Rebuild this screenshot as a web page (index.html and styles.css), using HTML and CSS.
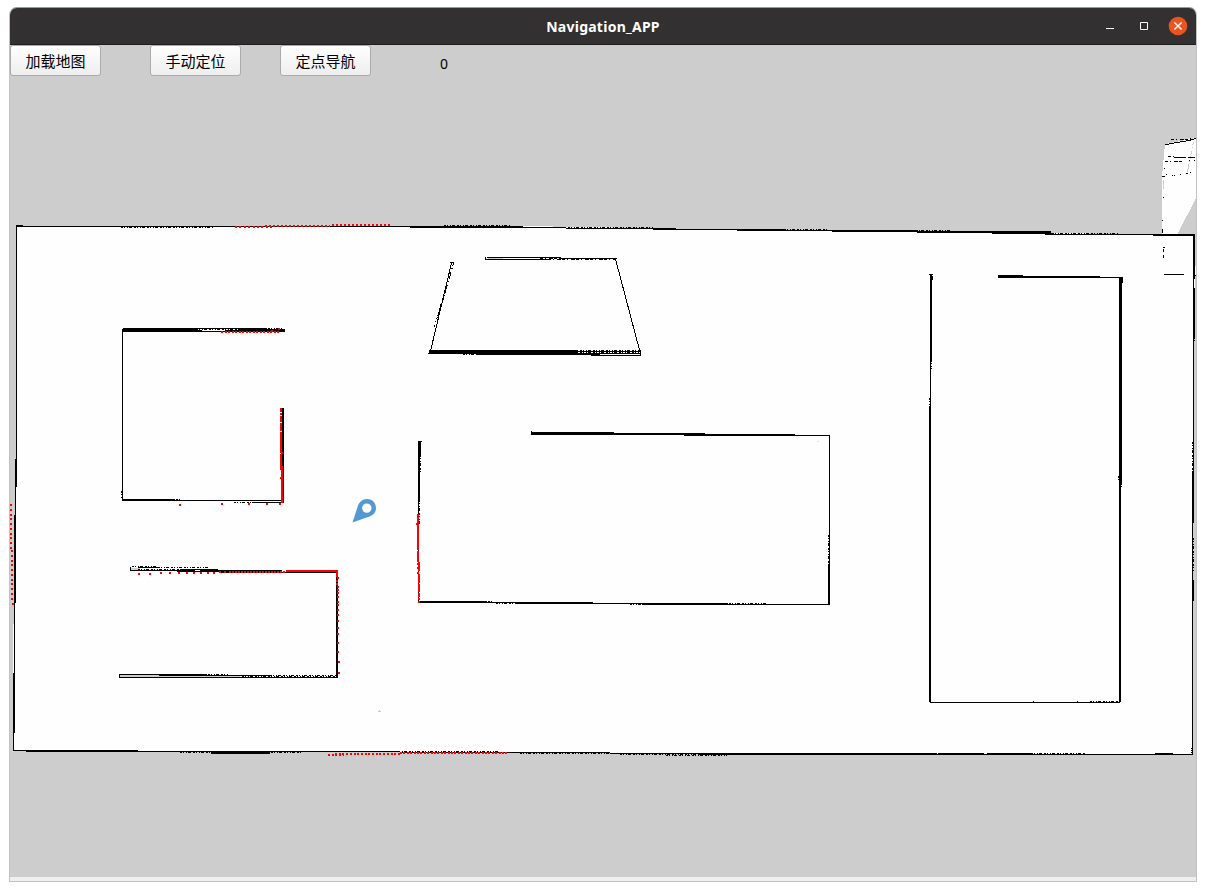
FILE: index.html
```html
<!DOCTYPE html>
<html lang="zh-CN">
<head>
<meta charset="utf-8">
<title>Navigation_APP</title>
<link rel="stylesheet" href="styles.css">
</head>
<body>
<main class="window">
  <header class="titlebar">
    <h1 class="title">Navigation_APP</h1>
    <div class="controls">
      <svg width="20" height="20" viewBox="0 0 20 20"><path class="glyph" d="M6 12.5h8"/></svg>
      <svg width="20" height="20" viewBox="0 0 20 20"><path class="glyph" d="M6.5 6.5h7v7h-7z"/></svg>
      <svg width="20" height="20" viewBox="0 0 20 20"><circle class="close" cx="10" cy="10" r="9.3"/><path class="cross" d="M6.4 6.4l7.2 7.2M13.6 6.4l-7.2 7.2"/></svg>
    </div>
  </header>
  <section class="workspace">
    <svg class="map" width="1186" height="832" viewBox="10 45 1186 832">
      <!-- free space -->
      <path class="free" d="M1165 144L1196 138V198L1177 235H1162V176L1165 144Z"/>
      <path class="free" d="M16 226H523L700 229L920 231L1050 233L1195 235L1192 754H900L500 752L13 750V673L15 480L16 456Z"/>
      <!-- unexplored gaps inside double walls -->
      <path class="gap" d="M120 675.5H240M120 676.5H240M131 568.5H140M131 569.5H138M488 258.5H503M378 711.5h3M379 710.5h1M818 441.5h1"/>
      <path class="gap dash" d="M1193.5 142L1187.5 172"/>
      <path class="gap" d="M1163.5 180V189"/>
      <path class="free-line" d="M1195.5 266V275"/>
      <!-- outer walls -->
      <path class="wall" d="M16.5 225V459M15.5 487V603M14.5 602V674M13.5 673V751"/>
      <path class="wall w2" d="M16 459V487M15 515V602M14 673V733"/>
      <path class="wall" d="M16 225.5H23M16 226.5H410M523 227.5H566M566 228.5H654M676 229.5H740M784 230.5H832"/>
      <path class="wall w2" d="M410 227H523M653 229H676M737 230H784M832 231H918M917 232H1051M992 233H1051M1153 235H1195"/>
      <path class="wall" d="M1045 234.5H1160M1004 233.5H1052"/>
      <path class="wall fine" d="M121 227.5H213M444 225.5H510M568 227.5H654M784 229.5H828M913 230.5H950M1052 233.5H1118"/>
      <path class="wall w2" d="M1194 235V279M1194 288V337M1193 472V523M1193 580V601"/>
      <path class="wall" d="M1193.5 279V523M1192.5 523V755M1194 275.5h2"/>
      <path class="wall fine" d="M1194.5 337V343M1192.5 442V472M1193.5 538V572"/>
      <path class="wall" d="M13 750.5H138M26 751.5H400M400 752.5H610M610 753.5H937M700 754.5H1193M938 753.5H984M987 753.5H1031M1155 753.5H1173M1192 748.5h-1M1192 750.5h-1M1192 752.5h-1"/>
      <path class="wall fine" d="M180 752.5H302M212 753.5H260M396 751.5H500M520 753.5H610M1031 753.5H1085M620 754.5H700M666 755.5H727"/>
      <path class="wall w2" d="M211 753H270"/>
      <!-- upper left room -->
      <path class="wall" d="M122.5 329V500M122 500.5H283M122 499.5H175M252 502.5H283M123 328.5H267M123 331.5H285M196 330.5H202M225 330.5H285M239 329.5H285"/>
      <path class="wall w3" d="M123 329.5H196"/>
      <path class="wall fine" d="M176 499.5H182M234 502.5H252M196 329.5H240M268 328.5H282M121.5 491V499"/>
      <path class="wall w2" d="M283 408V503"/>
      <!-- trapezoid room -->
      <path class="wall" d="M430.5 351L451.5 263M450 262.5H454M485 259.5H548M487 257.5H561M485.5 257V260M560 258.5H617M615.5 259L640 352M441 304L438 316"/>
      <path class="wall dash" d="M453.5 263L448 283L441 307L434 327M548 259.5H616M540 258.5H561"/>
      <path class="wall w3" d="M429 351.5H578"/>
      <path class="wall" d="M428 353.5H641M476 354.5H600M591 355.5H641M640.5 350V356M578 351.5H641"/>
      <path class="wall fine" d="M580 350.5H641M580 352.5H641M463 354.5H476"/>
      <!-- lower left room -->
      <path class="wall" d="M130 570.5H195M130.5 567V571M138 567.5H158M177 571.5H280M180 569.5H218M219 572.5H337M200 570.5H282"/>
      <path class="wall fine" d="M132 566.5H157M158 567.5H210M138 569.5H218M218 570.5H280"/>
      <path class="wall" d="M119 674.5H207M119.5 674V678M159 675.5H270M120 677.5H338"/>
      <path class="wall fine" d="M208 674.5H228M242 676.5H337M270 675.5H337"/>
      <path class="wall w2" d="M337 572V678"/>
      <!-- middle room -->
      <path class="wall" d="M418 441.5H422M418.5 441V602M419.5 441V500M420.5 441V455M829.5 435V605M728 604.5H830M487 602.5H523M593 603.5H644M795 435.5H830"/>
      <path class="wall w2" d="M419 602H487M515 603H593M642 604H728M548 434H684M684 435H795M829 564V605"/>
      <path class="wall w3" d="M531 433.5H614"/>
      <path class="wall" d="M614 433.5H705M531.5 431V435"/>
      <path class="wall fine" d="M420.5 455V472M419.5 500V525M828.5 535V564M488 601.5H494M496 603.5H515M729 603.5H766M630 604.5H642"/>
      <!-- right room -->
      <path class="wall w2" d="M931 275V360M930 406V702M1120 483V702M998 277H1100"/>
      <path class="wall w3" d="M1120.5 278V483"/>
      <path class="wall" d="M929 274.5H933M930.5 360V406M932.5 276V280M998 275.5H1023M1100 277.5H1123M1122.5 277V283M930 702.5H1120"/>
      <path class="wall fine" d="M1090 701.5H1118M929.5 398V406M931.5 360V369M1121.5 483V488M1118.5 476V480"/>
      <path class="wall" d="M1033 701.5h1M1077 701.5h1"/>
      <!-- fragments beyond the wall -->
      <path class="wall" d="M1165 144.5h4M1169 143.5h5M1174 142.5h6M1180 141.5h6M1186 140.5h5M1190 139.5h4M1164 274.5H1184M1163 247.5h2M1163.5 249v3M1163.5 255v3M1162.5 220v1M1162.5 229v4M1163.5 197v1M1162 176.5h3"/>
      <path class="wall dash" d="M1171 139.5H1182L1196 138.5M1168 156.5H1175M1165 161.5H1183"/>
      <path class="wall" d="M1174 157.5H1186M1188 157.5H1195M1189 160.5H1190M1194 160.5H1195M1166 174.5h1M1172 175.5h1M1174 175.5h1M1180 174.5h1M1186 173.5h2M1190 172.5h1M1164 168.5h1"/>
      <!-- laser scan returns -->
      <path class="scan" d="M235 227H275" stroke-dasharray="2 2.4"/>
      <path class="scan" d="M265 226H330M332 225H390" stroke-dasharray="2 2"/>
      <path class="scan" d="M221 332H280M278 329h2M271 331h2" stroke-dasharray="2 1.5"/>
      <path class="scan" d="M281 408V412M281 413V415M281 416V422M281 423V431M281 432V453M281 454V470M282 452V454M282 466V503M280 478h2M279 504h2M266 504h2M248 504h2M221 504h2M179 505h2"/>
      <path class="scan" d="M11 504V550M12 550V601" stroke-dasharray="2 2.75"/>
      <path class="scan" d="M12 604h2M418 514V550M418 551V562M419 562V571M418 563v2M418 567v2M418 572v2M419 574V583M419 584V592M419 593V597M419 598v2M418 602h2M416 524h2"/>
      <path class="scan" d="M138 574h2M149 574h2M160 573h2M169 573h2M178 573h2M186 573h2M193 573h2M200 573h2M207 573h2M213 573h2M219 572h2M224 572h2M286 571H338M337 571V577"/>
      <path class="scan" d="M229 572H286" stroke-dasharray="2 1"/>
      <path class="scan" d="M338 577v2M337 580v2M337 583v2M338 586v2M338 589v2M338 592v2M338 596v2M338 601v2M338 604v2M338 609v2M338 614v2M338 620v2M338 627v2M338 633v2M338 642v2M338 651v2M338 673h2M338 662h2"/>
      <path class="scan" d="M328 755H344M335 754H400" stroke-dasharray="2 1.7"/>
      <path class="scan" d="M400 753H508" stroke-dasharray="2 1.4"/>
      <!-- robot marker -->
      <path class="robot" fill-rule="evenodd" d="M352.5 522.5L357.4 507.5C358.8 502 362.5 499 367 499C372.5 499 376 503 376 508C376 513.4 372 516.3 366.5 517.4ZM366.8 503.4A4.7 4.7 0 1 0 366.8 512.8A4.7 4.7 0 1 0 366.8 503.4Z"/>
    </svg>
    <nav class="toolbar">
      <button class="tool">加载地图</button>
      <button class="tool">手动定位</button>
      <button class="tool">定点导航</button>
      <output class="count">0</output>
    </nav>
  </section>
  <footer class="statusbar"></footer>
</main>
</body>
</html>
```
FILE: styles.css
```css
* { box-sizing: border-box; }
body { margin: 0; background: #fff; font-family: "Noto Sans", "Noto Sans CJK SC", sans-serif; }
.window {
  width: 1188px; height: 875px; margin: 7px 9px;
  border: 1px solid #c2c2c2; border-top-color: #9b9b9b;
  border-radius: 8px 8px 0 0; overflow: hidden;
  display: flex; flex-direction: column; background: #cdcdcd;
}
.titlebar {
  height: 37px; flex: none; background: #323030; border-bottom: 1px solid #1e1e1e;
  display: grid; grid-template-columns: 1fr auto 1fr; align-items: center; padding-right: 8px;
}
.title {
  grid-column: 2; margin: 0 0 0 8px; padding-top: 2px; color: #fff;
  font: bold 14px/20px "Noto Sans", sans-serif; letter-spacing: .25px;
}
.controls { grid-column: 3; justify-self: end; display: flex; gap: 14px; }
.controls svg { display: block; }
.glyph { fill: none; stroke: #fff; stroke-width: 1; }
.close { fill: #e95420; }
.cross { fill: none; stroke: #fff; stroke-width: 1.4; }
.workspace { position: relative; height: 832px; flex: none; }
.map { display: block; shape-rendering: crispEdges; }
.map path { fill: none; }
.map .free { fill: #fefefe; }
.map .free-line { stroke: #fefefe; stroke-width: 1; }
.map .gap { stroke: #cdcdcd; stroke-width: 1; }
.map .wall { stroke: #000; stroke-width: 1; }
.map .w2 { stroke-width: 2; }
.map .w3 { stroke-width: 3; }
.map .fine { stroke-dasharray: 2 1 1 2 1 1 3 2; }
.map .dash { stroke-dasharray: 3 2 1 3 4 1; }
.map .scan { stroke: #f00; stroke-width: 2; }
.map .robot { fill: #5299d3; shape-rendering: geometricPrecision; }
.toolbar { position: absolute; top: 0; left: 0; display: flex; align-items: flex-start; }
.tool {
  width: 91px; height: 31px; margin: 0 39px 0 0; padding: 1px 0 0;
  border: 1px solid #ababab; border-radius: 3px;
  background: linear-gradient(#fefefe, #eee); color: #000;
  font: 15px/22px "Noto Sans CJK SC", sans-serif;
}
.tool:first-child { margin-right: 49px; }
.count { margin: 9px 0 0 30px; font-size: 14px; line-height: 20px; }
.statusbar { height: 4px; flex: none; background: #efefef; }
```
